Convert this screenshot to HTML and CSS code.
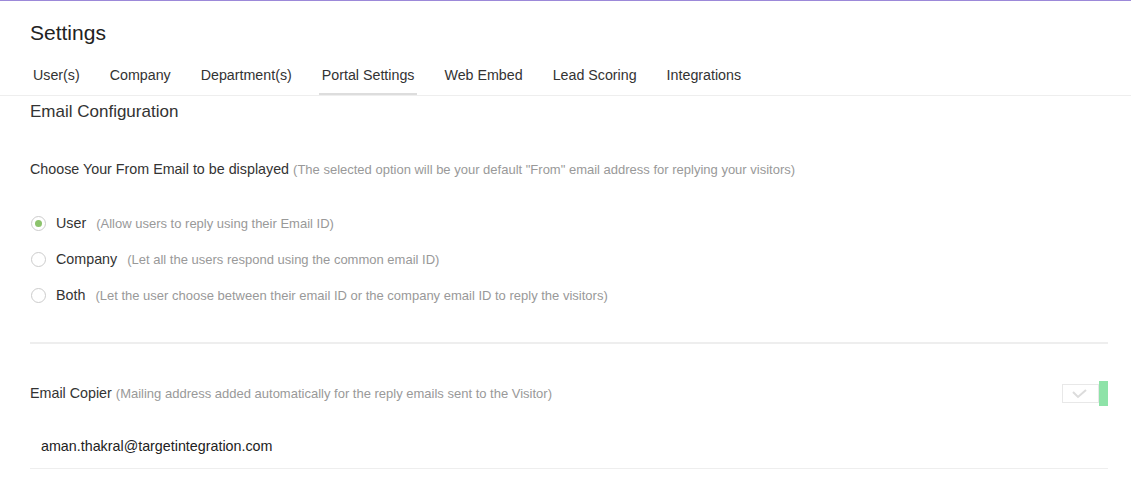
FILE: index.html
```html
<!DOCTYPE html>
<html lang="en">
<head>
    <meta charset="UTF-8">
    <meta name="viewport" content="width=device-width, initial-scale=1.0">
    <title>Settings</title>
    <link rel="stylesheet" href="styles.css">
</head>
<body>
    <div class="header">
        <h1>Settings</h1>
        <div class="tabs">
            <a class="tab">User(s)</a>
            <a class="tab">Company</a>
            <a class="tab">Department(s)</a>
            <a class="tab active">Portal Settings</a>
            <a class="tab">Web Embed</a>
            <a class="tab">Lead Scoring</a>
            <a class="tab">Integrations</a>
        </div>
    </div>

    <div class="content">
        <h2>Email Configuration</h2>

        <p class="label">Choose Your From Email to be displayed <span class="hint">(The selected option will be your default "From" email address for replying your visitors)</span></p>

        <div class="options">
            <label class="option">
                <span class="radio checked"></span>
                <span class="name">User</span>
                <span class="hint">(Allow users to reply using their Email ID)</span>
            </label>
            <label class="option">
                <span class="radio"></span>
                <span class="name">Company</span>
                <span class="hint">(Let all the users respond using the common email ID)</span>
            </label>
            <label class="option">
                <span class="radio"></span>
                <span class="name">Both</span>
                <span class="hint">(Let the user choose between their email ID or the company email ID to reply the visitors)</span>
            </label>
        </div>

        <hr class="divider">

        <div class="copier">
            <p class="label">Email Copier <span class="hint">(Mailing address added automatically for the reply emails sent to the Visitor)</span></p>
            <div class="toggle">
                <span class="toggle-box">
                    <svg width="18" height="10" viewBox="0 0 18 10"><polyline points="1,3 6,8 14,1" fill="none" stroke="#dcdcdc" stroke-width="2"/></svg>
                </span>
                <span class="toggle-knob"></span>
            </div>
        </div>

        <div class="email-input">aman.thakral@targetintegration.com</div>
    </div>
</body>
</html>
```

FILE: styles.css
```css
body {
    margin: 0;
    font-family: 'Liberation Sans', Arial, sans-serif;
    color: #333;
    background: white;
    border-top: 1px solid #9c89d9;
}
.header { padding-top: 20px; border-bottom: 1px solid #eee; }
h1 {
    margin: 0 0 20px 30px;
    font-size: 21px;
    font-weight: normal;
    line-height: 24px;
    color: #222;
}
.tabs { display: flex; gap: 24px; padding-left: 30px; }
.tab {
    padding: 0 3px 8px;
    font-size: 14.25px;
    line-height: 20px;
    color: #333;
    border-bottom: 2px solid transparent;
}
.tab.active { border-bottom-color: #ddd; }

.content { padding: 0 23px 0 30px; }
h2 {
    margin: 6px 0 0 0;
    font-size: 17px;
    font-weight: normal;
    line-height: 20px;
    color: #333;
}
.label { margin: 0; font-size: 14.3px; line-height: 18px; color: #333; }
.content > .label { margin-top: 38px; }
.hint { font-size: 13px; color: #999; }

.options { margin-top: 26px; }
.option { display: flex; align-items: center; height: 36px; font-size: 14.3px; }
.radio {
    width: 13px;
    height: 13px;
    border: 1px solid #ccc;
    border-radius: 50%;
    margin-left: 1px;
    margin-right: 10px;
    display: flex;
    align-items: center;
    justify-content: center;
}
.radio.checked::after {
    content: "";
    width: 7px;
    height: 7px;
    border-radius: 50%;
    background: #8cc36c;
}
.name { margin-right: 10px; color: #333; }

.divider { margin: 29px 0 0; border: none; border-top: 2px solid #eee; }

.copier {
    display: flex;
    align-items: center;
    justify-content: space-between;
    height: 25px;
    margin-top: 37px;
}
.toggle { display: flex; align-items: center; }
.toggle-box {
    width: 35px;
    height: 17px;
    border: 1px solid #e8e8e8;
    display: flex;
    align-items: center;
    justify-content: center;
}
.toggle-knob { width: 9px; height: 25px; background: #8ee3a8; }

.email-input {
    margin-top: 19px;
    padding-left: 11px;
    height: 43px;
    line-height: 43px;
    font-size: 14.3px;
    color: #222;
    border-bottom: 1px solid #eee;
}
```
